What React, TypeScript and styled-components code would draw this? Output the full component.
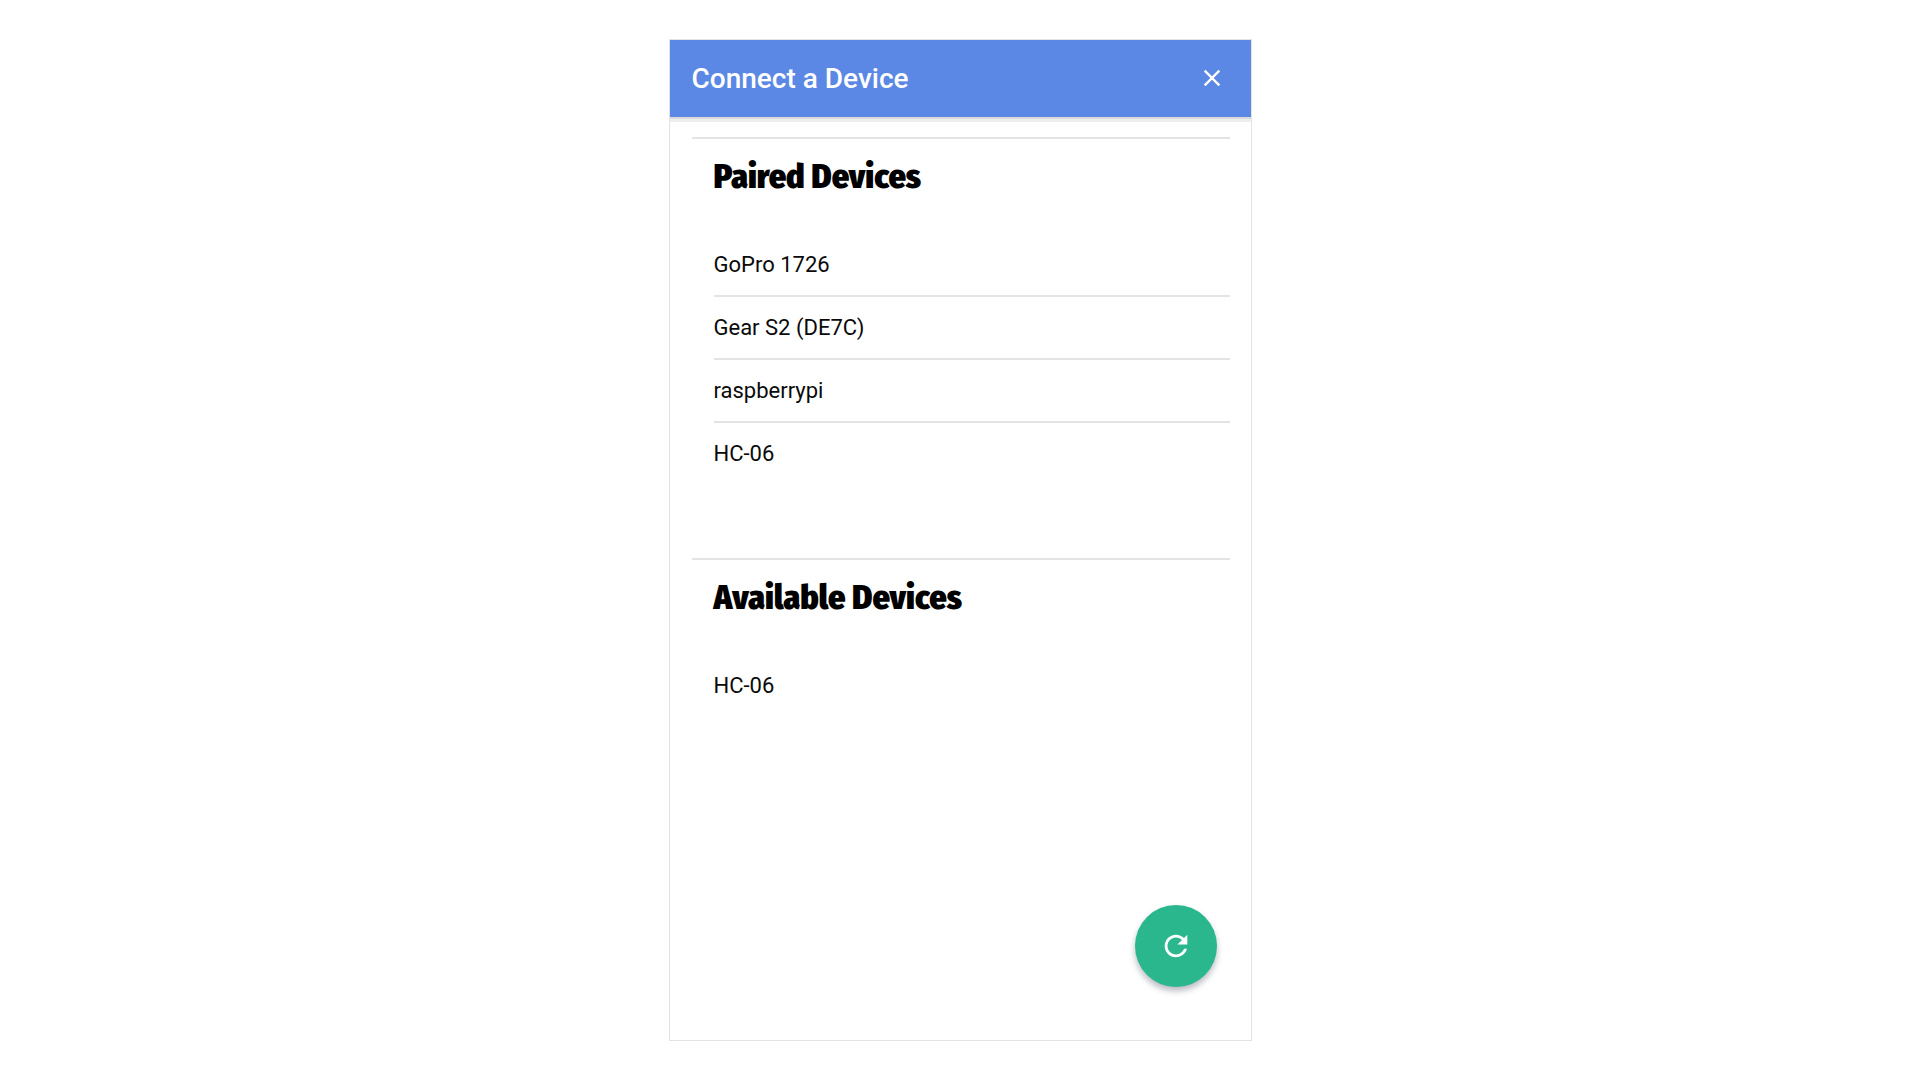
import React from "react";
import styled, { createGlobalStyle } from "styled-components";

const GlobalStyle = createGlobalStyle`
  *, *::before, *::after { box-sizing: border-box; }
  body {
    margin: 0;
    background: #ffffff;
    color: #0a0a0a;
    font-family: Roboto, "Liberation Sans", sans-serif;
  }
`;

const Page = styled.div`
  display: flex;
  justify-content: center;
  min-height: 100vh;
  padding: 39px 0;
`;

const Screen = styled.main`
  display: flex;
  flex-direction: column;
  width: 100%;
  max-width: 583px;
  border: 1px solid #e3e3e3;
`;

const Header = styled.header`
  display: flex;
  align-items: center;
  justify-content: space-between;
  height: 77px;
  padding: 0 21px 0 22px;
  background: #5b87e5;
  color: #ffffff;
  box-shadow: 0 2px 0 #d9d9d9, 0 5px 0 #eeeeee;
`;

const Title = styled.h1`
  margin: 0;
  font-size: 28px;
  font-weight: 500;
  line-height: 36px;
`;

const CloseButton = styled.button`
  display: flex;
  padding: 4px 4px 6px;
  border: 0;
  background: none;
  color: inherit;
  cursor: pointer;
`;

const Content = styled.div`
  display: flex;
  flex: 1;
  flex-direction: column;
  gap: 72px;
  padding: 20px 21px 0 22px;
`;

const Section = styled.section`
  padding-left: 22px;
  border-top: 2px solid #e4e4e4;
`;

const Heading = styled.h2`
  margin: 0 0 19px;
  color: #000000;
  font-family: "Fira Sans Condensed", "Fira Sans", Roboto, sans-serif;
  font-size: 34px;
  font-weight: 900;
  line-height: 76px;
`;

const List = styled.ul`
  margin: 0;
  padding: 0;
  list-style: none;
`;

const Item = styled.li`
  height: 63px;
  border-bottom: 2px solid #e4e4e4;

  &:last-child {
    border-bottom-color: transparent;
  }
`;

const DeviceButton = styled.button`
  width: 100%;
  height: 100%;
  padding: 0;
  border: 0;
  background: none;
  color: inherit;
  font: inherit;
  font-size: 22px;
  text-align: left;
  cursor: pointer;
`;

const RefreshButton = styled.button`
  display: flex;
  align-items: center;
  justify-content: center;
  align-self: flex-end;
  width: 82px;
  height: 82px;
  margin: 24px 34px 53px;
  padding: 0;
  border: 0;
  border-radius: 50%;
  background: #2ab78d;
  color: #ffffff;
  box-shadow: 0 4px 6px rgba(30, 40, 60, 0.32);
  cursor: pointer;
`;

const Icon = ({ size, path }: { size: number; path: string }) => (
  <svg width={size} height={size} viewBox="0 0 24 24" fill="currentColor" aria-hidden="true">
    <path d={path} />
  </svg>
);

const CLOSE =
  "M19 6.41L17.59 5 12 10.59 6.41 5 5 6.41 10.59 12 5 17.59 6.41 19 12 13.41 17.59 19 19 17.59 13.41 12z";
const REFRESH =
  "M17.65 6.35C16.2 4.9 14.21 4 12 4c-4.42 0-7.99 3.58-7.99 8s3.57 8 7.99 8c3.73 0 6.84-2.55 7.73-6h-2.08c-.82 2.33-3.04 4-5.65 4-3.31 0-6-2.69-6-6s2.69-6 6-6c1.66 0 3.14.69 4.22 1.78L13 11h7V4l-2.35 2.35z";

const groups = [
  { id: "paired", title: "Paired Devices", devices: ["GoPro 1726", "Gear S2 (DE7C)", "raspberrypi", "HC-06"] },
  { id: "available", title: "Available Devices", devices: ["HC-06"] },
];

export default function App() {
  return (
    <>
      <GlobalStyle />
      <Page>
        <Screen>
          <Header>
            <Title>Connect a Device</Title>
            <CloseButton type="button" aria-label="Close">
              <Icon size={28} path={CLOSE} />
            </CloseButton>
          </Header>
          <Content>
            {groups.map((group) => (
              <Section key={group.id} aria-labelledby={group.id}>
                <Heading id={group.id}>{group.title}</Heading>
                <List>
                  {group.devices.map((device) => (
                    <Item key={device}>
                      <DeviceButton type="button">{device}</DeviceButton>
                    </Item>
                  ))}
                </List>
              </Section>
            ))}
          </Content>
          <RefreshButton type="button" aria-label="Refresh">
            <Icon size={34} path={REFRESH} />
          </RefreshButton>
        </Screen>
      </Page>
    </>
  );
}
